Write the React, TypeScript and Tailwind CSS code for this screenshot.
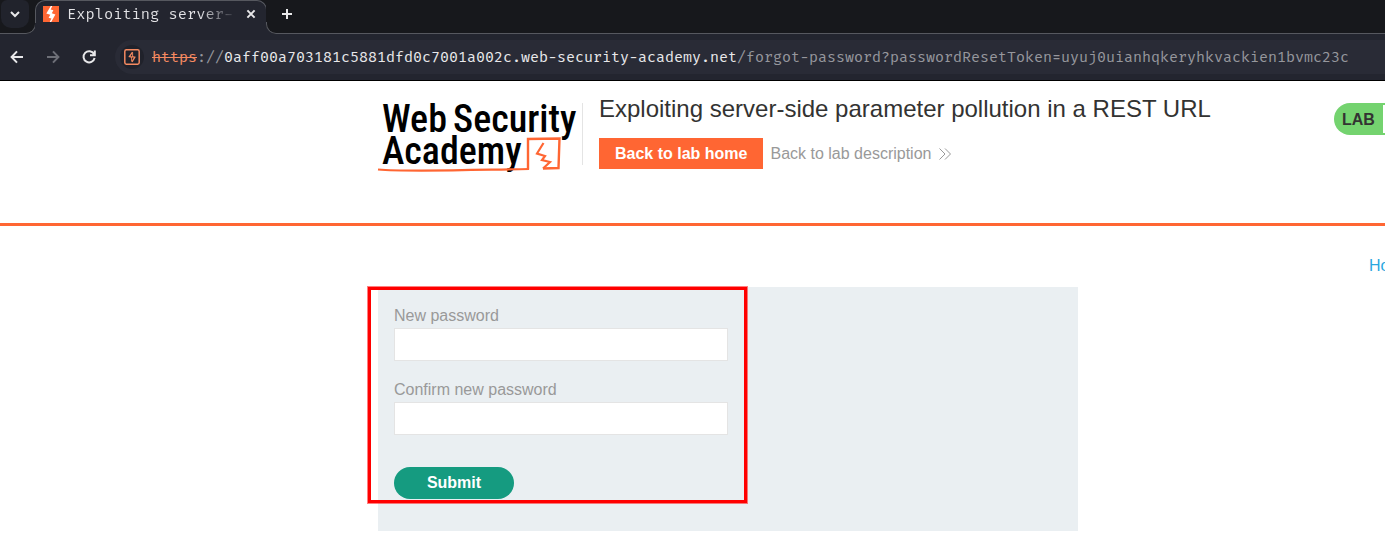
import React from "react";

function BurpBolt() {
  return (
    <svg viewBox="0 0 16 16" className="size-4 shrink-0" aria-hidden="true">
      <rect width="16" height="16" fill="#ff6633" />
      <path d="M9.300 0 7.800 0 3.300 7.600 7.300 8.800 5.600 11.800 8.400 12.600 6.700 16 8.200 16 12.400 8.400 8.800 7.200 10.400 4.200 7.700 3.400Z" fill="#fff" />
    </svg>
  );
}

function SiteIcon() {
  return (
    <svg viewBox="0 0 16 16" className="size-4" fill="none" stroke="#f58a61" aria-hidden="true">
      <rect x="0.8" y="0.8" width="14.4" height="14.4" rx="1.6" strokeWidth="1.5" />
      <path d="M8.5 3.2 5.4 7.6 8 8.2M8 12.8 10.8 8.2 7.8 7.6" strokeWidth="1.3" />
      <path d="M8.6 3.4V7.6M7.6 8V12.4" strokeWidth="0.9" />
    </svg>
  );
}

type LineIconProps = { d: string; className: string; strokeWidth?: number };

function LineIcon({ d, className, strokeWidth = 2 }: LineIconProps) {
  return (
    <svg viewBox="0 0 16 16" className={className} fill="none" stroke="currentColor" strokeWidth={strokeWidth} aria-hidden="true">
      <path d={d} />
    </svg>
  );
}

function TabStrip() {
  return (
    <div className="flex h-[34px] bg-[#23252f] font-['Fira_Code','DejaVu_Sans_Mono',monospace]">
      <div className="relative w-9 shrink-0 rounded-br-[10px] bg-[#17181c]">
        <button type="button" aria-label="Search tabs" className="ml-px flex h-7 w-7 items-center justify-center rounded-b-[10px] rounded-t-md bg-[#21232c] text-[#e8e8ea]">
          <LineIcon d="M4 6 8 10 12 6" className="size-4" />
        </button>
        <div className="absolute inset-x-0 bottom-0 h-3 rounded-br-[10px] border-b border-r border-[#56585f]" />
      </div>
      <div className="relative -ml-px w-[232px] shrink-0 bg-[#17181c]">
        <div className="flex h-full items-center rounded-t-[10px] bg-[#23252f] pb-[6px] pl-2 pr-2">
          <BurpBolt />
          <span className="ml-2 w-[166px] overflow-hidden whitespace-nowrap bg-linear-to-r from-[#e3e3e6] from-80% to-[#3a3c45] bg-clip-text pt-px text-[15px] leading-5 text-transparent">
            Exploiting server-
          </span>
          <button type="button" aria-label="Close tab" className="ml-auto text-[#e8e8ea]">
            <LineIcon d="M4.4 4.4 11.6 11.6M11.6 4.4 4.4 11.6" className="size-4" />
          </button>
        </div>
        <div className="absolute inset-x-0 top-0 h-[23px] rounded-t-[10px] border-x border-t border-[#56585f]" />
      </div>
      <div className="relative -ml-px flex-1 rounded-bl-[10px] bg-[#17181c]">
        <button type="button" aria-label="New tab" className="ml-[13px] flex h-7 w-4 items-center justify-center text-[#e8e8ea]">
          <LineIcon d="M8 3V13M3 8H13" className="size-4" />
        </button>
        <div className="absolute inset-x-0 bottom-0 h-3 rounded-bl-[10px] border-b border-l border-[#56585f]" />
      </div>
    </div>
  );
}

function Toolbar() {
  return (
    <div className="flex h-[47px] items-center border-b border-black bg-[#23252f] pl-[9px] text-[#e8e8ea]">
      <button type="button" aria-label="Back">
        <LineIcon d="M14 8H2.8M8 2.4 2.6 8 8 13.6" className="size-4" />
      </button>
      <button type="button" aria-label="Forward" className="ml-5 text-[#6d6f77]">
        <LineIcon d="M2 8H13.2M8 2.4 13.4 8 8 13.6" className="size-4" />
      </button>
      <button type="button" aria-label="Reload" className="ml-5">
        <LineIcon d="M13 5A5.6 5.6 0 1 0 13.6 9M13.8 1.6V6.2H9" className="size-4" />
      </button>
      <div className="ml-[18px] flex h-[34px] flex-1 items-center overflow-hidden rounded-l-full bg-[#292b36] pl-[5px]">
        <span className="flex size-6 items-center justify-center rounded-full bg-[#20222b]">
          <SiteIcon />
        </span>
        <span className="ml-2 whitespace-nowrap font-['Fira_Mono','Noto_Sans_Mono','DejaVu_Sans_Mono',monospace] text-[15px] leading-5 text-[#96979d]">
          <span className="text-[#f58a61] line-through">https</span>://
          <span className="text-[#e8e8ea]">0aff00a703181c5881dfd0c7001a002c.web-security-academy.net</span>
          /forgot-password?passwordResetToken=uyuj0uianhqkeryhkvackien1bvmc23c
        </span>
      </div>
    </div>
  );
}

function AcademyLogo() {
  return (
    <svg viewBox="0 0 204 74" className="h-[74px] w-[204px] shrink-0 overflow-visible" role="img" aria-label="Web Security Academy">
      <g fontFamily="'Roboto Condensed', Roboto, sans-serif" fontWeight="500" fontSize="38" fill="#000">
        <text x="4" y="29">Web</text>
        <text x="75" y="29">Security</text>
        <text x="4" y="61">Academy</text>
      </g>
      <g fill="none" stroke="#ff6633">
        <path d="M150 66.500V36L181.500 35.500 180.500 65 165 65.500" strokeWidth="2.400" />
        <path d="M165.500 40 159 50.500 167 53 164 57 172 59 165 65.500" strokeWidth="2.200" />
        <path d="M0 66.500C30 69 90 67 151 66" strokeWidth="2.200" />
      </g>
    </svg>
  );
}

function LabHeader() {
  return (
    <header className="flex h-[145px] items-start border-b-3 border-[#ff6633] pl-[378px] pt-[22px]">
      <div className="flex shrink-0">
        <div className="h-[62px] w-[205px] border-r border-[#e4e4e4]">
          <AcademyLogo />
        </div>
        <div className="-mt-2 ml-4">
          <h1 className="text-2xl leading-7 whitespace-nowrap">Exploiting server-side parameter pollution in a REST URL</h1>
          <div className="mt-[15px] flex items-center gap-[7px] whitespace-nowrap text-base">
            <a href="#home" className="flex h-[31px] items-center bg-[#ff6633] px-4 font-bold text-white">
              Back to lab home
            </a>
            <a href="#description" className="flex items-center gap-2 text-[#999]">
              Back to lab description
              <svg viewBox="0 0 12 12" className="size-3" fill="none" stroke="#999" aria-hidden="true">
                <path d="M0.500 0.500 6 6 0.500 11.500M6 0.500 11.500 6 6 11.500" />
              </svg>
            </a>
          </div>
        </div>
      </div>
      <div className="ml-auto flex h-8 items-center rounded-l-full bg-[#74d36f] pl-2">
        <span className="w-[41px] pt-px font-bold">LAB</span>
        <span className="h-7 w-[2px] bg-white" />
      </div>
    </header>
  );
}

function PasswordField({ id, label }: { id: string; label: string }) {
  return (
    <div className="flex flex-col">
      <label htmlFor={id} className="pt-px text-base leading-6">
        {label}
      </label>
      <input id={id} type="password" className="h-[33px] border border-[#e4e4e4] bg-white px-2 outline-none" />
    </div>
  );
}

export default function App() {
  return (
    <div className="min-h-screen overflow-hidden bg-white font-['Liberation_Sans',Arial,sans-serif] text-[#333332]">
      <TabStrip />
      <Toolbar />
      <LabHeader />
      <main className="pl-[378px]">
        <nav className="flex justify-end pb-2 pt-7">
          <a href="#home" className="w-4 overflow-hidden whitespace-nowrap text-base leading-6 text-[#29a7df]">
            Home
          </a>
        </nav>
        <form className="relative mt-px w-[700px] bg-[#eaeff2] px-4 pb-8 pt-4 text-[#999]">
          <div className="flex w-[334px] flex-col gap-4">
            <PasswordField id="new-password" label="New password" />
            <PasswordField id="confirm-password" label="Confirm new password" />
          </div>
          <button type="submit" className="mt-8 block h-8 w-[120px] rounded-full bg-[#159b80] font-bold text-white">
            Submit
          </button>
          <div className="pointer-events-none absolute -left-[10px] top-0 h-[216px] w-[379px] border-3 border-[#ff0000] outline-1 outline-[#ff0000]/50" />
        </form>
      </main>
    </div>
  );
}
